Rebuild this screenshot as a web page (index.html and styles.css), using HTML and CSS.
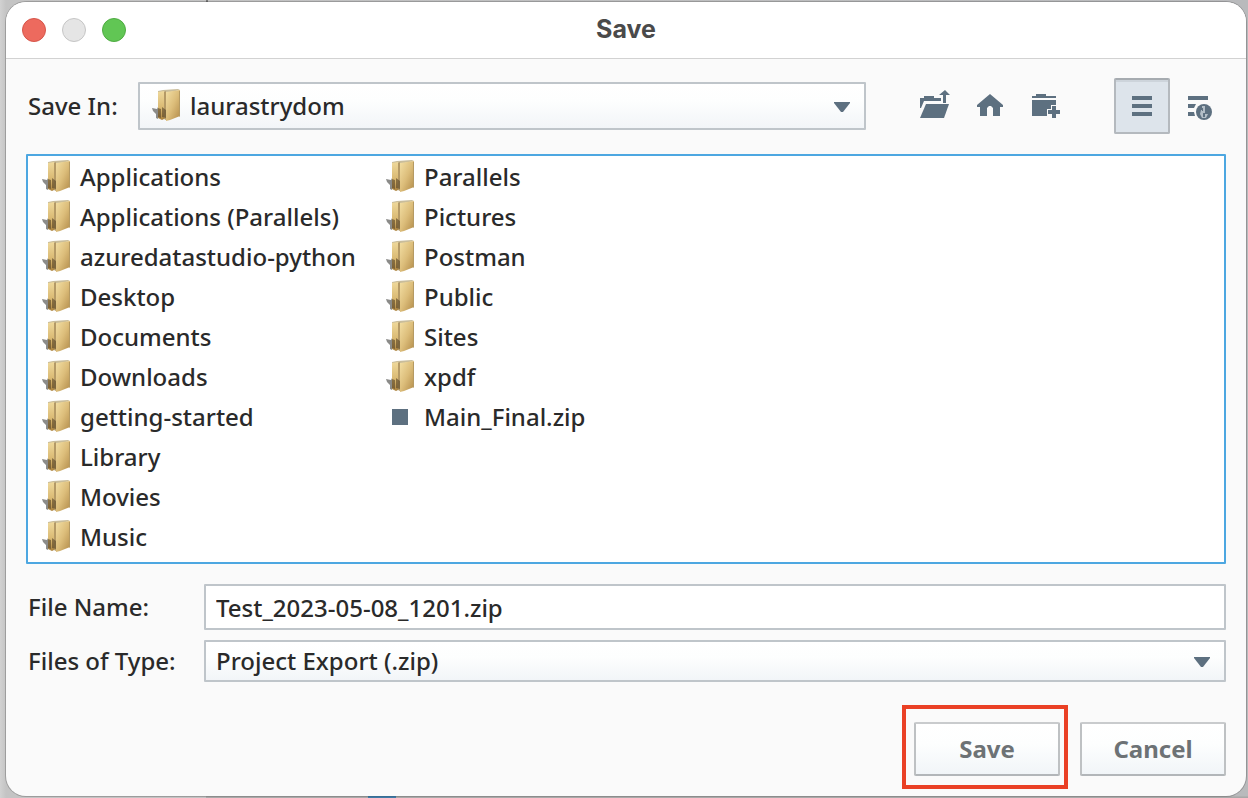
FILE: index.html
```
<!DOCTYPE html>
<html lang="en">
<head>
  <meta charset="UTF-8">
  <meta name="viewport" content="width=device-width, initial-scale=1.0">
  <title>Save</title>
  <link rel="stylesheet" href="styles.css">
</head>
<body>
  <svg class="defs" width="0" height="0" aria-hidden="true">
    <defs>
      <linearGradient id="gold" x1="0" y1="0" x2="1" y2="1">
        <stop offset="0" stop-color="#f3dfa4"/>
        <stop offset="0.5" stop-color="#dcbd7a"/>
        <stop offset="1" stop-color="#b18a48"/>
      </linearGradient>
      <linearGradient id="goldSide" x1="0" y1="0" x2="0" y2="1">
        <stop offset="0" stop-color="#efd99c"/>
        <stop offset="0.6" stop-color="#d9b871"/>
        <stop offset="1" stop-color="#a9803c"/>
      </linearGradient>
      <symbol id="folder" viewBox="0 0 28 34">
        <path d="M0 19l5 1 1-2v12l-2-1v-4l-3-3z" fill="#8b8b89"/>
        <path d="M6 2l5-1 15-1 2 1-14 3-8 1z" fill="#c9bd9b"/>
        <path d="M6 3l6-1v28l-2 1-4-2z" fill="url(#goldSide)"/>
        <path d="M12 3l2-1v29l-2-1z" fill="#b59a66"/>
        <path d="M14 3l14-2v26l-10 4-4 1z" fill="url(#gold)"/>
        <path d="M27 2h1v25l-1 1z" fill="#b59a63"/>
        <path d="M6 19l3 1v9l-3-1zM10 18l4 3v8l-4-1z" fill="#5d4a2b" opacity="0.65"/>
      </symbol>
    </defs>
  </svg>

  <main class="window">
    <header class="titlebar">
      <div class="lights">
        <button class="light close" aria-label="Close"></button>
        <button class="light minimize" aria-label="Minimize"></button>
        <button class="light zoom" aria-label="Zoom"></button>
      </div>
      <h1>Save</h1>
    </header>

    <form class="dialog" onsubmit="return false">
      <div class="location">
        <label for="saveIn">Save In:</label>
        <div class="combo with-icon">
          <select id="saveIn"><option>laurastrydom</option></select>
          <svg class="folder"><use href="#folder"/></svg>
          <svg class="arrow" viewBox="0 0 16 10"><path d="M0 0h16v1L9 10H7L0 1z"/></svg>
        </div>
        <div class="toolbar">
          <button type="button" class="tool" aria-label="Up one level">
            <svg width="32" height="32" viewBox="-2 0 32 32">
              <path d="M0 8h4V6h10v2h7v3H4l-3 7H0z"/>
              <path d="M6 14h23l-5 14H0z"/>
              <path d="M25 0l5 5h-4v8h-3V5h-4z"/>
            </svg>
          </button>
          <button type="button" class="tool" aria-label="Home">
            <svg width="28" height="28" viewBox="0 0 28 28">
              <path d="M14 2l13 11v2h-3v9h-7v-8l-2-2h-2l-2 2v8H4v-9H1v-2z"/>
            </svg>
          </button>
          <button type="button" class="tool" aria-label="New folder">
            <svg width="28" height="28" viewBox="0 0 28 28">
              <path d="M0 4h4V2h10v2h10v2H0z"/>
              <path d="M0 8h24v5h-5v4h-4v7H0z"/>
              <path d="M20 14h4v4h4v4h-4v4h-4v-4h-4v-4h4z"/>
            </svg>
          </button>
          <button type="button" class="tool list-view active" aria-label="List" aria-pressed="true">
            <svg width="20" height="20" viewBox="0 0 20 20">
              <path d="M0 0h20v4H0zM0 8h20v4H0zM0 16h20v4H0z"/>
            </svg>
          </button>
          <button type="button" class="tool" aria-label="Details">
            <svg width="28" height="28" viewBox="-4 -4 28 28">
              <path d="M0 0h20v4H0zM0 8h8l-2 4H0zM0 16h6l1 4H0z"/>
              <circle cx="16" cy="16" r="8"/>
              <path d="M14 10h3v8h3l-2 4h-4l-2-4 1-4h1z" fill="#b3bec7"/>
              <path d="M14 12h1v3h-1zM15 17h2v4h-2z"/>
            </svg>
          </button>
        </div>
      </div>

      <ul class="files">
        <li><svg class="folder"><use href="#folder"/></svg>Applications</li>
        <li><svg class="folder"><use href="#folder"/></svg>Applications (Parallels)</li>
        <li><svg class="folder"><use href="#folder"/></svg>azuredatastudio-python</li>
        <li><svg class="folder"><use href="#folder"/></svg>Desktop</li>
        <li><svg class="folder"><use href="#folder"/></svg>Documents</li>
        <li><svg class="folder"><use href="#folder"/></svg>Downloads</li>
        <li><svg class="folder"><use href="#folder"/></svg>getting-started</li>
        <li><svg class="folder"><use href="#folder"/></svg>Library</li>
        <li><svg class="folder"><use href="#folder"/></svg>Movies</li>
        <li><svg class="folder"><use href="#folder"/></svg>Music</li>
        <li><svg class="folder"><use href="#folder"/></svg>Parallels</li>
        <li><svg class="folder"><use href="#folder"/></svg>Pictures</li>
        <li><svg class="folder"><use href="#folder"/></svg>Postman</li>
        <li><svg class="folder"><use href="#folder"/></svg>Public</li>
        <li><svg class="folder"><use href="#folder"/></svg>Sites</li>
        <li><svg class="folder"><use href="#folder"/></svg>xpdf</li>
        <li><span class="file-icon"></span>Main_Final.zip</li>
      </ul>

      <div class="fields">
        <label for="fileName">File Name:</label>
        <input id="fileName" type="text" value="Test_2023-05-08_1201.zip">
        <label for="fileType">Files of Type:</label>
        <div class="combo">
          <select id="fileType"><option>Project Export (.zip)</option></select>
          <svg class="arrow" viewBox="0 0 16 10"><path d="M0 0h16v1L9 10H7L0 1z"/></svg>
        </div>
      </div>

      <div class="actions">
        <div class="highlight"><button type="submit" class="action">Save</button></div>
        <button type="button" class="action">Cancel</button>
      </div>
    </form>
  </main>
</body>
</html>
```
FILE: styles.css
```
* { box-sizing: border-box; }
body {
  margin: 0;
  padding: 2px 2px 2px 6px;
  min-height: 100vh;
  /* desktop showing round the window */
  background:
    linear-gradient(#4a8fc0, #3a729c) 368px 100% / 28px 2px no-repeat,
    linear-gradient(#b4b4b4, #a4a4a4) 206px 100% / 1042px 2px no-repeat,
    linear-gradient(#777, #777) 206px 0 / 2px 2px no-repeat,
    linear-gradient(90deg, #d2d2d2, #c4c4c4 6px, #b9babc);
  font-family: "Noto Sans", sans-serif;
  font-size: 24px;
  font-weight: 500;
  line-height: 32px;
  color: #2a2a2a;
}
button, input, select { font: inherit; color: inherit; }
.defs { position: absolute; }

.window {
  background: #fafafa;
  border-radius: 20px;
  overflow: hidden;
  box-shadow: 0 0 0 1px rgba(0, 0, 0, 0.2);
}
.titlebar {
  display: grid;
  grid-template-columns: 1fr auto 1fr;
  align-items: center;
  height: 57px;
  padding: 0 16px;
  background: #fff;
  border-bottom: 1px solid #d2d2d2;
}
.titlebar h1 {
  margin: 0;
  padding-bottom: 2px;
  font-family: Inter, sans-serif;
  font-size: 25px;
  font-weight: 700;
  color: #4a4a4a;
}
.lights { display: flex; gap: 16px; }
.light { width: 24px; height: 24px; padding: 0; border-radius: 50%; }
.close { background: #ed6a5e; border: 1px solid #d5554a; }
.minimize { background: #e5e5e5; border: 1px solid #c5c5c5; }
.zoom { background: #61c654; border: 1px solid #4fab42; }

.dialog { padding: 19px 20px 20px; }
.location { display: flex; align-items: center; margin-bottom: 20px; }
.location label { flex: 0 0 112px; padding-left: 2px; }
.location .combo { flex: 1; height: 48px; }

.combo { position: relative; height: 42px; }
.combo select {
  width: 100%;
  height: 100%;
  padding: 0 40px 0 10px;
  border: 2px solid #bfc5ca;
  border-radius: 1px;
  background: linear-gradient(#fff, #fdfefe 40%, #f2f5f8);
  appearance: none;
}
.with-icon select { padding-left: 50px; }
.combo .folder { position: absolute; left: 14px; top: 7px; pointer-events: none; }
.combo .arrow {
  position: absolute;
  right: 16px;
  top: calc(50% - 4px);
  width: 16px;
  height: 10px;
  pointer-events: none;
}
.folder { width: 28px; height: 34px; }
.arrow, .tool { fill: #5d7080; }

.toolbar { display: flex; margin-left: 40px; }
.tool {
  display: flex;
  align-items: center;
  justify-content: center;
  width: 56px;
  height: 56px;
  padding: 0;
  border: 2px solid transparent;
  border-radius: 2px;
  background: none;
}
.list-view { margin-left: 40px; }
.active {
  background: #dde4eb;
  border-color: #a6abb0 #b4b9be #b4b9be;
  box-shadow: inset 0 2px #cdd4db;
}

.files {
  display: grid;
  grid-auto-flow: column;
  grid-template-rows: repeat(10, 40px);
  grid-auto-columns: 344px;
  margin: 0 0 20px;
  padding: 1px 14px 5px;
  list-style: none;
  background: #fff;
  border: 2px solid #4da7e1;
  border-radius: 1px;
  overflow: hidden;
}
.files li { display: flex; align-items: center; gap: 10px; white-space: nowrap; }
.file-icon { width: 16px; height: 16px; margin: 0 6px; background: #5d7080; }

.fields {
  display: grid;
  grid-template-columns: 178px 1fr;
  row-gap: 10px;
  align-items: center;
  margin-bottom: 40px;
}
.fields label { padding-left: 2px; }
.fields input {
  width: 100%;
  height: 46px;
  padding: 0 10px;
  background: #fff;
  border: 2px solid #bfc5ca;
  border-radius: 1px;
}

.actions { display: flex; justify-content: flex-end; gap: 20px; }
.action {
  width: 146px;
  height: 54px;
  padding: 0;
  border: 2px solid;
  border-color: #c9cbcd #bec1c3 #b2b6b9;
  border-radius: 2px;
  background: linear-gradient(#fff, #fdfefe 40%, #f1f5f8);
  font-weight: 700;
  color: #6d7275;
}
.highlight { position: relative; }
/* red marker frame drawn round the Save button */
.highlight::after {
  content: "";
  position: absolute;
  inset: -17px -8px -13px -12px;
  border: 4px solid #ea4025;
  pointer-events: none;
}
```
